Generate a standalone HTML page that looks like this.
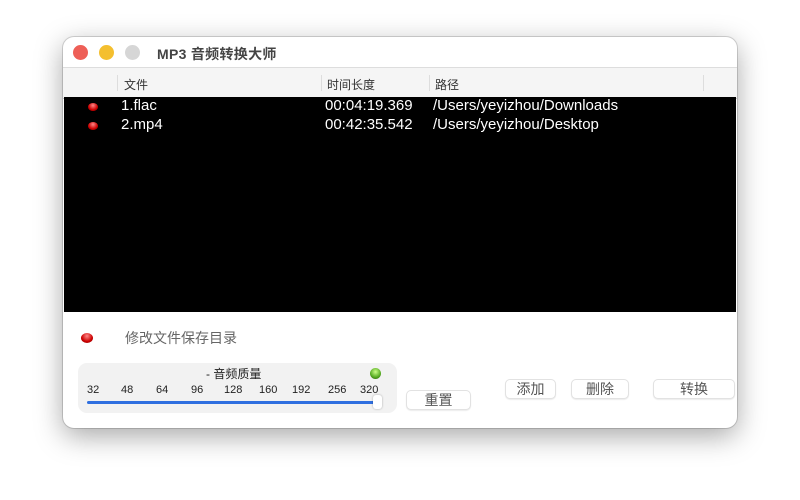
<!DOCTYPE html><html><head><meta charset="utf-8"><style>
body{margin:0;width:800px;height:500px;background:#fff;position:relative;overflow:hidden;font-family:"Liberation Sans","Noto Sans CJK SC",sans-serif}
.a{position:absolute}
.win{left:63px;top:37px;width:674px;height:391px;background:#fff;border-radius:11px;box-shadow:0 8px 28px rgba(0,0,0,.35),0 0 0 1px rgba(0,0,0,.15);overflow:hidden}
.dot{width:15px;height:15px;border-radius:50%;top:8px}
.hd{font-size:12px;color:#333;top:39px}
.row{color:#fff;font-size:15px}
.led{width:10px;height:8px;border-radius:50%;background:radial-gradient(circle at 50% 30%,#f88,#c00 60%,#700)}
.btn{background:#fff;border:1px solid #e2e2e2;border-radius:5px;font-size:14px;color:#555;text-align:center;box-shadow:0 1px 1px rgba(0,0,0,.08)}
.n{font-size:11px;color:#222;top:21px}
</style></head><body>
<div class="a win">
<div class="a dot" style="left:10px;background:#ee5f57"></div>
<div class="a dot" style="left:36px;background:#f4bf2f"></div>
<div class="a dot" style="left:62px;background:#d6d6d6"></div>
<div class="a" style="left:94px;top:7px;font-size:14px;font-weight:bold;color:#444;letter-spacing:0.3px">MP3 音频转换大师</div>
<div class="a" style="left:0;top:30px;width:674px;height:30px;background:#f5f5f5;border-top:1px solid #ddd;border-bottom:1px solid #ccc"></div>
<div class="a" style="left:54px;top:38px;width:1px;height:16px;background:#ddd"></div>
<div class="a" style="left:258px;top:38px;width:1px;height:16px;background:#ddd"></div>
<div class="a" style="left:366px;top:38px;width:1px;height:16px;background:#ddd"></div>
<div class="a" style="left:640px;top:38px;width:1px;height:16px;background:#ddd"></div>
<div class="a hd" style="left:61px">文件</div>
<div class="a hd" style="left:264px">时间长度</div>
<div class="a hd" style="left:372px">路径</div>
<div class="a" style="left:1px;top:60px;width:672px;height:215px;background:#000"></div>
<div class="a led" style="left:25px;top:66px"></div>
<div class="a led" style="left:25px;top:85px"></div>
<div class="a row" style="left:58px;top:60px">1.flac</div>
<div class="a row" style="left:58px;top:79px">2.mp4</div>
<div class="a row" style="left:262px;top:60px">00:04:19.369</div>
<div class="a row" style="left:262px;top:79px">00:42:35.542</div>
<div class="a row" style="left:370px;top:60px">/Users/yeyizhou/Downloads</div>
<div class="a row" style="left:370px;top:79px">/Users/yeyizhou/Desktop</div>
<div class="a led" style="left:18px;top:296px;width:12px;height:10px"></div>
<div class="a" style="left:62px;top:291px;font-size:14px;color:#666">修改文件保存目录</div>
<div class="a" style="left:15px;top:326px;width:319px;height:50px;background:#f2f2f2;border-radius:9px">
<div class="a" style="left:128px;top:2px;font-size:12px;color:#222">- 音频质量</div>
<div class="a" style="left:292px;top:5px;width:11px;height:11px;border-radius:50%;background:radial-gradient(circle at 50% 35%,#cf8,#5a2 60%,#250)"></div>
<div class="a n" style="left:9px">32</div><div class="a n" style="left:43px">48</div><div class="a n" style="left:78px">64</div><div class="a n" style="left:113px">96</div><div class="a n" style="left:146px">128</div><div class="a n" style="left:181px">160</div><div class="a n" style="left:214px">192</div><div class="a n" style="left:250px">256</div><div class="a n" style="left:282px">320</div>
<div class="a" style="left:9px;top:38px;width:290px;height:3px;background:#2f6fe0;border-radius:2px"></div>
<div class="a" style="left:295px;top:32px;width:9px;height:14px;background:#fff;border-radius:3px;box-shadow:0 0 2px rgba(0,0,0,.3)"></div>
</div>
<div class="a btn" style="left:343px;top:353px;width:63px;height:18px;line-height:18px">重置</div>
<div class="a btn" style="left:442px;top:342px;width:49px;height:18px;line-height:18px">添加</div>
<div class="a btn" style="left:508px;top:342px;width:56px;height:18px;line-height:18px">删除</div>
<div class="a btn" style="left:590px;top:342px;width:80px;height:18px;line-height:18px">转换</div>
</div>
</body></html>
